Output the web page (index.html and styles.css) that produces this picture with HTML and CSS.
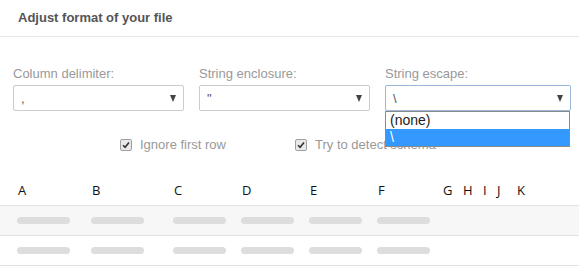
FILE: index.html
```html
<!DOCTYPE html>
<html>
<head>
    <meta charset="UTF-8">
    <title>Adjust format</title>
    <link rel="stylesheet" href="styles.css">
</head>
<body>
    <div class="header">Adjust format of your file</div>

    <div class="form">
        <div class="fields">
            <div class="field">
                <div class="field-label">Column delimiter:</div>
                <div class="select">
                    <span class="select-value">,</span>
                    <span class="select-arrow"></span>
                </div>
            </div>
            <div class="field">
                <div class="field-label">String enclosure:</div>
                <div class="select">
                    <span class="select-value">"</span>
                    <span class="select-arrow"></span>
                </div>
            </div>
            <div class="field field-wide">
                <div class="field-label">String escape:</div>
                <div class="select select-open">
                    <span class="select-value">\</span>
                    <span class="select-arrow"></span>
                </div>
                <!-- open list of the escape select -->
                <div class="dropdown">
                    <div class="dropdown-option">(none)</div>
                    <div class="dropdown-option selected">\</div>
                </div>
            </div>
        </div>

        <div class="checks">
            <label class="check">
                <span class="check-box">
                    <svg width="8" height="8" viewBox="0 0 8 8"><path d="M1 4.2 L3.1 6.3 L7 1.6" fill="none" stroke="#333" stroke-width="1.6"/></svg>
                </span>
                Ignore first row
            </label>
            <label class="check check-second">
                <span class="check-box">
                    <svg width="8" height="8" viewBox="0 0 8 8"><path d="M1 4.2 L3.1 6.3 L7 1.6" fill="none" stroke="#333" stroke-width="1.6"/></svg>
                </span>
                Try to detect schema
            </label>
        </div>
    </div>

    <div class="preview">
        <div class="preview-row preview-head">
            <div class="cell">A</div>
            <div class="cell">B</div>
            <div class="cell">C</div>
            <div class="cell">D</div>
            <div class="cell">E</div>
            <div class="cell">F</div>
            <div class="cell">G</div>
            <div class="cell">H</div>
            <div class="cell">I</div>
            <div class="cell">J</div>
            <div class="cell">K</div>
        </div>
        <div class="preview-row preview-odd">
            <div class="cell"><span class="bar"></span></div>
            <div class="cell"><span class="bar"></span></div>
            <div class="cell"><span class="bar"></span></div>
            <div class="cell"><span class="bar"></span></div>
            <div class="cell"><span class="bar"></span></div>
            <div class="cell"><span class="bar"></span></div>
        </div>
        <div class="preview-row">
            <div class="cell"><span class="bar"></span></div>
            <div class="cell"><span class="bar"></span></div>
            <div class="cell"><span class="bar"></span></div>
            <div class="cell"><span class="bar"></span></div>
            <div class="cell"><span class="bar"></span></div>
            <div class="cell"><span class="bar"></span></div>
        </div>
    </div>
</body>
</html>
```

FILE: styles.css
```css
body {
    margin: 0;
    font-family: "Liberation Sans", Arial, sans-serif;
    background-color: #ffffff;
    color: #555555;
}

.header {
    height: 36px;
    line-height: 36px;
    padding: 0 18px;
    font-size: 13px;
    font-weight: bold;
    color: #555555;
    border-bottom: 1px solid #e8e8e8;
}

.form {
    padding: 29px 8px 0 13px;
}

.fields {
    display: flex;
    gap: 15px;
}

.field {
    position: relative;
    width: 171px;
}

.field-wide {
    width: 186px;
}

.field-label {
    font-size: 13px;
    line-height: 16px;
    color: #999999;
    margin-bottom: 3px;
}

.select {
    box-sizing: border-box;
    height: 26px;
    border: 1px solid #cccccc;
    border-radius: 2px;
    display: flex;
    align-items: center;
    justify-content: space-between;
    padding: 0 7px 0 7px;
}

.select-open {
    border-color: #9ab6d8;
}

.select-value {
    font-size: 13px;
    color: #555555;
}

.select-arrow {
    width: 0;
    height: 0;
    border-left: 3.5px solid transparent;
    border-right: 3.5px solid transparent;
    border-top: 7px solid #444444;
}

/* открытый список */
.dropdown {
    position: absolute;
    left: 0;
    top: 45px;
    width: 185px;
    box-sizing: border-box;
    border: 1px solid #8a8a8a;
    background-color: #ffffff;
    z-index: 2;
}

.dropdown-option {
    height: 17px;
    line-height: 17px;
    padding-left: 4px;
    font-size: 14px;
    color: #222222;
}

.dropdown-option.selected {
    background-color: #3399ff;
    color: #ffffff;
}

.checks {
    display: flex;
    margin-top: 26px;
    padding-left: 107px;
}

.check {
    display: flex;
    align-items: center;
    gap: 8px;
    font-size: 13px;
    line-height: 16px;
    color: #999999;
}

.check-second {
    margin-left: 69px;
}

.check-box {
    box-sizing: border-box;
    width: 12px;
    height: 12px;
    border: 1px solid #a0a0a0;
    border-radius: 2px;
    background-color: #e9e9e9;
    display: flex;
    align-items: center;
    justify-content: center;
}

.preview {
    margin-top: 21px;
}

.preview-row {
    display: grid;
    grid-template-columns: 74px 82px 68px 68px 68px 65px 20px 20px 14px 20px 1fr;
    padding-left: 18px;
    height: 29px;
    align-items: center;
    border-bottom: 1px solid #e2e2e2;
}

.preview-head {
    height: 31px;
    font-family: "Open Sans", sans-serif;
    font-size: 13px;
    color: #111111;
}

.preview-odd {
    background-color: #f7f7f7;
}

.cell {
    display: flex;
    align-items: center;
}

.bar {
    display: block;
    width: 53px;
    height: 7px;
    margin-left: -1px;
    border-radius: 4px;
    background-color: #dddddd;
}
```
